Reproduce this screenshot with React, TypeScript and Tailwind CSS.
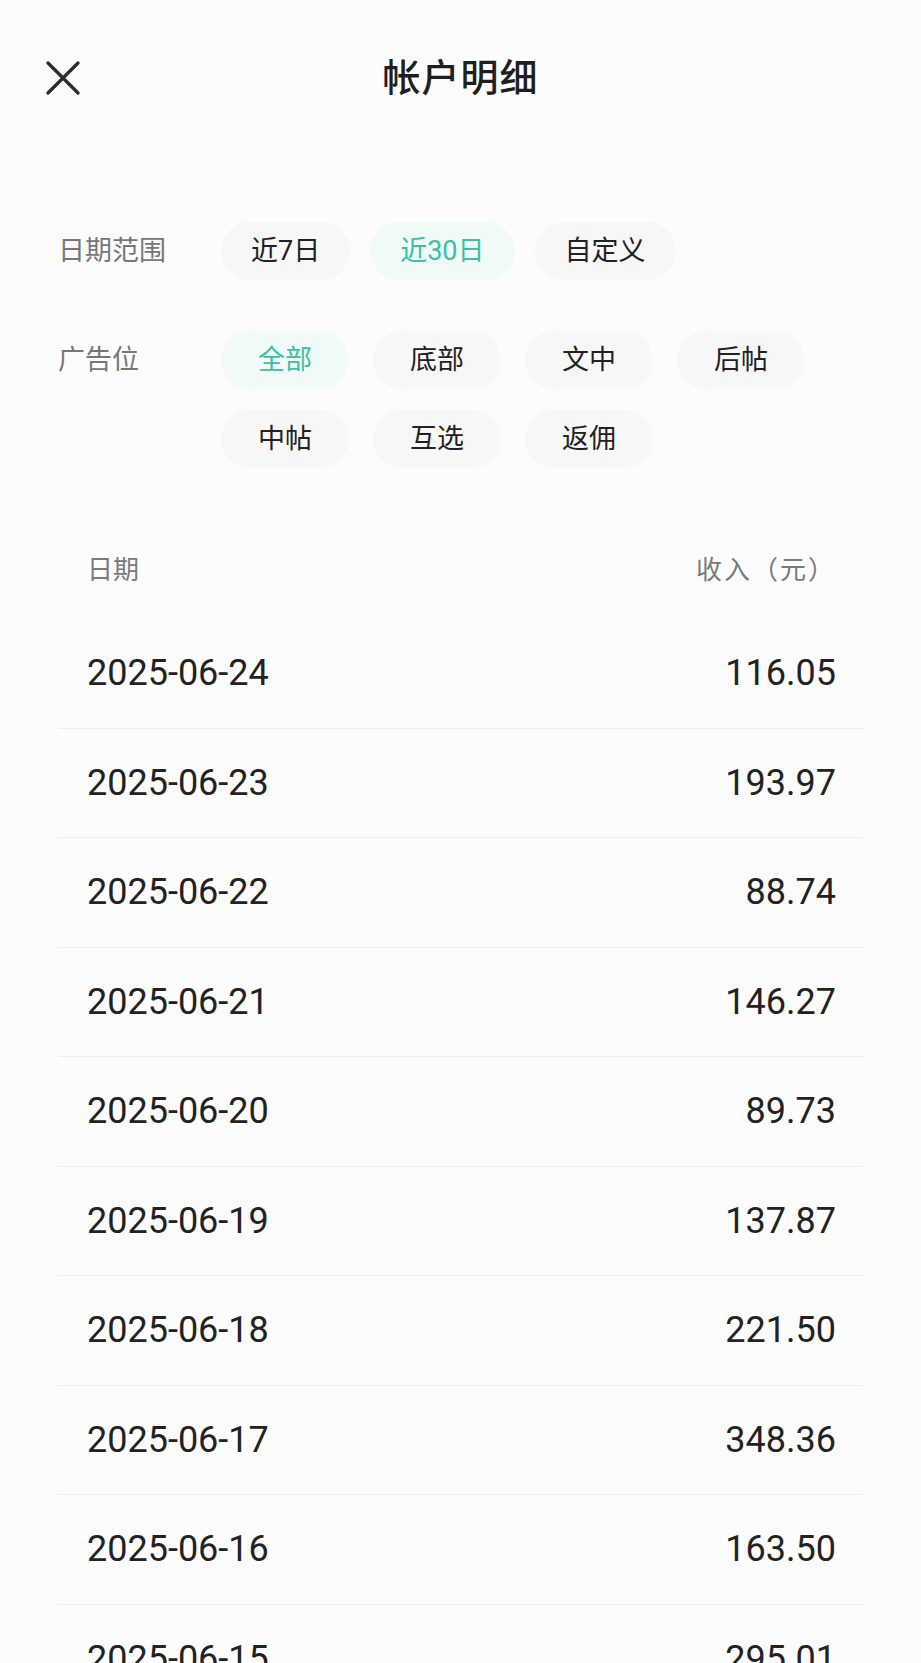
import React from "react";

const rows: [string, string][] = [
  ["2025-06-24", "116.05"],
  ["2025-06-23", "193.97"],
  ["2025-06-22", "88.74"],
  ["2025-06-21", "146.27"],
  ["2025-06-20", "89.73"],
  ["2025-06-19", "137.87"],
  ["2025-06-18", "221.50"],
  ["2025-06-17", "348.36"],
  ["2025-06-16", "163.50"],
  ["2025-06-15", "295.01"],
];

const font = "font-['Roboto','Noto_Sans_CJK_SC',sans-serif]";

function Chip({ label, active, fixed }: { label: string; active?: boolean; fixed?: boolean }) {
  return (
    <div
      className={`h-[58px] rounded-full flex items-center justify-center text-[27px] leading-none ${
        fixed ? "w-[128px]" : "px-[30px]"
      } ${active ? "bg-[#f0fbf8] text-[#3fbf9f]" : "bg-[#f7f7f7] text-[#222222]"}`}
    >
      {label}
    </div>
  );
}

export default function App() {
  return (
    <div className={`w-[921px] h-[1663px] overflow-hidden bg-[#fcfcfc] ${font}`}>
      {/* header */}
      <div className="grid grid-cols-[1fr_auto_1fr] items-center h-[156px]">
        <div className="pl-[46px] flex items-center">
          <svg width="34" height="34" viewBox="0 0 34 34" fill="none">
            <path d="M2 2 L32 32 M32 2 L2 32" stroke="#2b2b2b" strokeWidth="3.2" strokeLinecap="round" />
          </svg>
        </div>
        <div className="text-[38px] font-medium text-[#1f1f1f] leading-none tracking-[1px]">帐户明细</div>
        <div />
      </div>

      {/* filters */}
      <div className="pl-[58px] pt-[66px] flex flex-col gap-[51px]">
        <div className="flex items-center">
          <div className="w-[163px] text-[27px] text-[#777777] leading-none">日期范围</div>
          <div className="flex gap-[20px]">
            <Chip label="近7日" />
            <Chip label="近30日" active />
            <Chip label="自定义" />
          </div>
        </div>
        <div className="flex items-start">
          <div className="w-[163px] h-[58px] flex items-center text-[27px] text-[#777777] leading-none">广告位</div>
          <div className="grid grid-cols-[repeat(4,128px)] gap-x-[24px] gap-y-[21px]">
            <Chip label="全部" active fixed />
            <Chip label="底部" fixed />
            <Chip label="文中" fixed />
            <Chip label="后帖" fixed />
            <Chip label="中帖" fixed />
            <Chip label="互选" fixed />
            <Chip label="返佣" fixed />
          </div>
        </div>
      </div>

      {/* table */}
      <div className="mx-[58px] mt-[52px]">
        <div className="h-[99px] flex items-center justify-between pl-[29px] pr-[27px] text-[26px] text-[#7a7a7a] leading-none">
          <span>日期</span>
          <span className="tracking-[2px]">收入（元）</span>
        </div>
        {rows.map(([d, v]) => (
          <div
            key={d}
            className="h-[109.5px] flex items-center justify-between pl-[29px] pr-[27px] border-b border-[#ededed] text-[36px] text-[#222222] leading-none"
          >
            <span>{d}</span>
            <span>{v}</span>
          </div>
        ))}
      </div>
    </div>
  );
}
